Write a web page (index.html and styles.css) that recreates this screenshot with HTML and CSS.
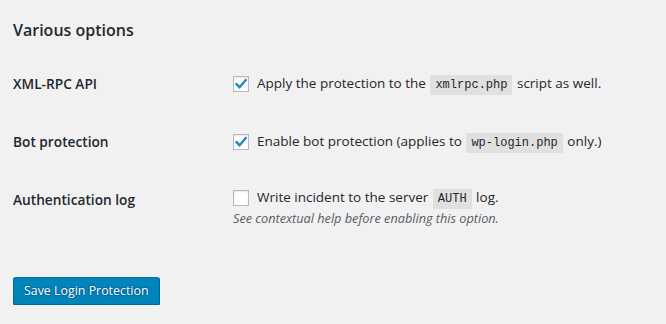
FILE: index.html
```html
<!DOCTYPE html>
<html>
<head>
<meta charset="utf-8">
<link rel="stylesheet" href="styles.css">
</head>
<body>
<div class="wrap">
  <h2 class="title">Various options</h2>
  <div class="form-table">
    <div class="row">
      <div class="th">XML-RPC API</div>
      <div class="td">
        <label class="check">
          <span class="box"><svg viewBox="0 0 16 16" width="16" height="16"><path d="M3.6 8.2 L6.6 11.2 L12.6 4.2" fill="none" stroke="#1e8cbe" stroke-width="2.4" stroke-linecap="square"/></svg></span>
          <span>Apply the protection to the <code>xmlrpc.php</code> script as well.</span>
        </label>
      </div>
    </div>
    <div class="row">
      <div class="th">Bot protection</div>
      <div class="td">
        <label class="check">
          <span class="box"><svg viewBox="0 0 16 16" width="16" height="16"><path d="M3.6 8.2 L6.6 11.2 L12.6 4.2" fill="none" stroke="#1e8cbe" stroke-width="2.4" stroke-linecap="square"/></svg></span>
          <span>Enable bot protection (applies to <code>wp-login.php</code> only.)</span>
        </label>
      </div>
    </div>
    <div class="row">
      <div class="th">Authentication log</div>
      <div class="td td-desc">
        <label class="check">
          <span class="box"></span>
          <span>Write incident to the server <code>AUTH</code> log.</span>
        </label>
        <p class="description">See contextual help before enabling this option.</p>
      </div>
    </div>
  </div>
  <p class="submit"><button class="button-primary" type="button">Save Login Protection</button></p>
</div>
</body>
</html>
```
FILE: styles.css
```css
html, body {
  margin: 0;
  padding: 0;
  background: #f1f1f1;
}
body {
  font-family: "Open Sans", "Noto Sans", sans-serif;
  color: #23282d;
  font-size: 13px;
}
.wrap {
  padding: 0 13px;
}
.title {
  margin: 0;
  padding-top: 17px;
  font-size: 16px;
  font-weight: 600;
  line-height: 26px;
}
.form-table {
  margin-top: 12px;
}
.row {
  display: grid;
  grid-template-columns: 210px 1fr;
}
.th {
  padding: 20px 10px 20px 0;
  line-height: 18px;
  font-size: 13.7px;
  font-weight: 600;
  align-self: start;
}
.td {
  padding: 15px 10px;
  align-self: center;
  font-size: 13.5px;
  line-height: 18px;
}
.td-desc {
  padding-top: 17px;
}
.check {
  display: flex;
  align-items: center;
  gap: 8px;
}
.box {
  width: 14px;
  height: 14px;
  border: 1px solid #b4b9be;
  background: #fff;
  box-shadow: inset 0 1px 2px rgba(0,0,0,.1);
  flex: none;
  position: relative;
}
.box svg {
  position: absolute;
  left: -1px;
  top: -1px;
}
code {
  font-family: "Liberation Mono", monospace;
  font-size: 12px;
  background: rgba(0,0,0,.07);
  padding: 3px 5px 3px;
  margin: 0 1px;
}
.description {
  margin: 2px 0 0;
  font-style: italic;
  font-size: 12.7px;
  color: #555d66;
  line-height: 17px;
}
.submit {
  margin: 0;
  padding-top: 35px;
}
.button-primary {
  font-family: inherit;
  font-size: 12.4px;
  height: 28px;
  padding: 0 10px 1px;
  color: #fff;
  background: #0085ba;
  border: 1px solid;
  border-color: #0073aa #006799 #006799;
  border-radius: 3px;
  box-shadow: 0 1px 0 #006799;
  text-shadow: 0 -1px 1px #006799, 1px 0 1px #006799, 0 1px 1px #006799, -1px 0 1px #006799;
}
```
